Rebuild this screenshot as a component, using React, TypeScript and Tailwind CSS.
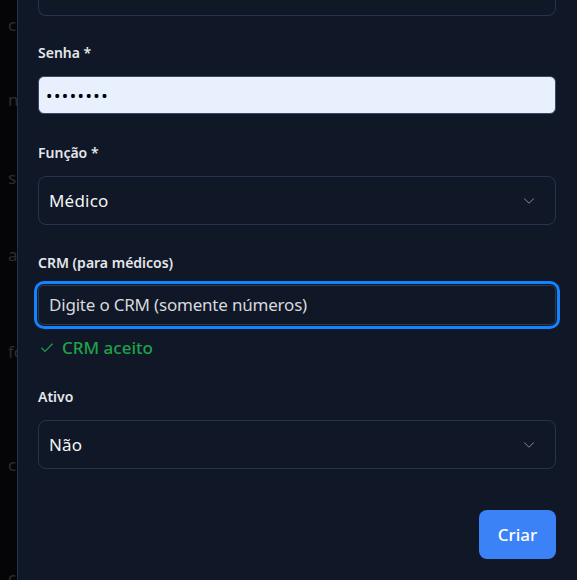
import { Check, ChevronDown } from "lucide-react"

const font = { fontFamily: '"Noto Sans", "Open Sans", sans-serif' }

function Label({ children, className = "" }: { children: React.ReactNode; className?: string }) {
  return <div className={"text-[14px] leading-5 font-semibold text-[#e5e7eb] " + className}>{children}</div>
}

function SelectBox({ value, className = "" }: { value: string; className?: string }) {
  return (
    <div
      className={
        "flex h-[49px] items-center justify-between rounded-lg border border-[#243550] bg-[#101726] pl-[10px] pr-[17px] " +
        className
      }
    >
      <span className="text-[17px] tracking-[0.2px] text-[#f3f4f6]">{value}</span>
      <ChevronDown className="h-[18px] w-[18px] text-[#8b93a1]" strokeWidth={1.25} />
    </div>
  )
}

export default function App() {
  return (
    <div className="flex h-[580px] w-[577px] overflow-hidden bg-[#050508]" style={font}>
      {/* page behind the overlay */}
      <div className="flex w-[17px] shrink-0 flex-col overflow-hidden pl-[8px] text-[17px] leading-6 text-[#2c2d30]">
        <span className="mt-[13px]">c</span>
        <span className="mt-[51px]">n</span>
        <span className="mt-[54px]">s</span>
        <span className="mt-[53px]">a</span>
        <span className="mt-[73px] whitespace-nowrap">fo</span>
        <span className="mt-[89px]">c</span>
        <span className="mt-[89px]">c</span>
      </div>

      {/* drawer */}
      <div className="flex flex-1 flex-col border-l border-[#1e3354] bg-[#101726] pl-[20px] pr-[21px]">
        <div className="h-[16px] rounded-b-lg border border-t-0 border-[#243550]" />

        <Label className="mt-[27px]">Senha *</Label>
        <input
          type="password"
          readOnly
          value="12345678"
          className="mt-[13px] h-[38px] w-full rounded-md border border-[#3a4a66] bg-[#e8f0fe] px-[7px] text-[17px] tracking-[1.5px] text-black outline-none"
        />

        <Label className="mt-[29px]">Função *</Label>
        <SelectBox value="Médico" className="mt-[13px]" />

        <Label className="mt-[28px]">CRM (para médicos)</Label>
        <div className="mt-[12px] flex h-[40px] items-center rounded-md border border-[#2a3b57] bg-[#101726] pl-[10px] ring-[3px] ring-[#1583ff] ring-offset-1 ring-offset-[#101726]">
          <span className="text-[17px] tracking-[-0.2px] text-[#d6d9de]">Digite o CRM (somente números)</span>
        </div>
        <div className="mt-[11px] flex items-center gap-[7px] pl-[1px] text-[17px] leading-6 font-medium text-[#1fa34a]">
          <Check className="h-[16px] w-[16px]" strokeWidth={1.75} />
          <span>CRM aceito</span>
        </div>

        <Label className="mt-[27px]">Ativo</Label>
        <SelectBox value="Não" className="mt-[13px]" />

        <div className="mt-[41px] flex justify-end">
          <button className="h-[49px] w-[77px] rounded-lg bg-[#3b82f6] text-[17px] font-medium text-white">Criar</button>
        </div>
      </div>
    </div>
  )
}
